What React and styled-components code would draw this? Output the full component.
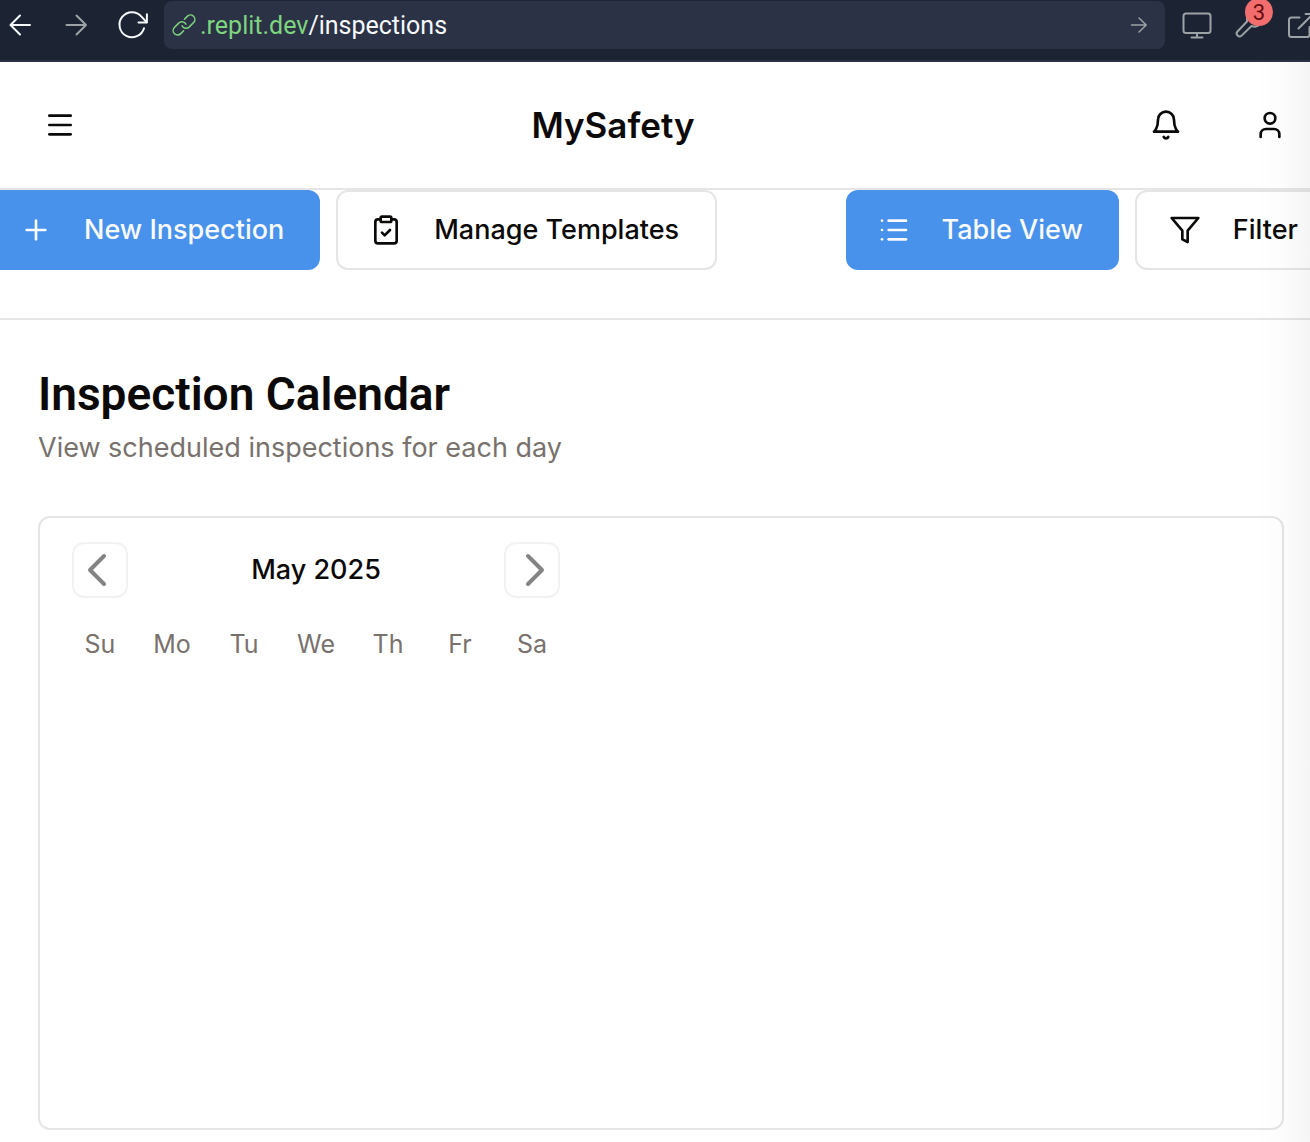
import React from "react";
import styled, { createGlobalStyle, css } from "styled-components";
import { Menu, Plus, ClipboardCheck, List } from "lucide-react";

const GlobalStyle = createGlobalStyle`
  *, *::before, *::after { box-sizing: border-box; }
  body {
    margin: 0;
    background: #fff;
    color: #0c0a09;
    font-family: Inter, "Liberation Sans", sans-serif;
    overflow-x: hidden;
  }
  button, input { font: inherit; color: inherit; }
  svg { display: block; flex: none; }
`;

const Page = styled.div`
  min-height: 100vh;
  display: flex;
  flex-direction: column;
`;

const BrowserBar = styled.header`
  display: flex;
  align-items: flex-start;
  height: 62px;
  padding-top: 1px;
  background: #1c2333;
  border-bottom: 2px solid #2b3245;
  overflow: hidden;
`;

const NavGroup = styled.nav`
  display: flex;
  gap: 8px;
  margin-left: -3px;
  padding-right: 7px;
`;

const BarButton = styled.button`
  position: relative;
  flex: none;
  display: grid;
  place-items: center;
  width: 48px;
  height: 48px;
  padding: 0;
  border: 0;
  background: none;
  color: ${(p) => (p.$dim ? "#9da2a6" : "#f5f9fc")};
`;

const AddressBar = styled.form`
  flex: 1;
  min-width: 0;
  display: flex;
  align-items: center;
  height: 48px;
  padding: 0 2px 0 8px;
  border-radius: 8px;
  background: #2b3245;
  font-family: Roboto, "Noto Sans", sans-serif;
  font-size: 25px;
  line-height: 33px;
`;

const Host = styled.label`
  display: flex;
  align-items: center;
  gap: 4px;
  color: #7fd57f;
`;

const PathInput = styled.input`
  flex: 1;
  min-width: 0;
  height: 33px;
  padding: 0;
  border: 0;
  outline: 0;
  background: none;
  color: #f5f9fc;
`;

const ToolGroup = styled.div`
  display: flex;
  gap: 4px;
  margin-right: -15px;
  padding-left: 8px;
`;

const Count = styled.span`
  position: absolute;
  top: -3px;
  left: 20px;
  width: 28px;
  height: 28px;
  border-radius: 14px;
  background: #f26d6d;
  color: #660d0d;
  font-family: Roboto, "Noto Sans", sans-serif;
  font-size: 22px;
  line-height: 30px;
  text-align: center;
`;

const AppFrame = styled.div`
  position: relative;
  flex: 1;
  overflow: hidden;

  &::after {
    content: "";
    position: absolute;
    inset: 0 0 0 auto;
    width: 56px;
    background: linear-gradient(to right, rgba(0, 0, 0, 0), rgba(0, 0, 0, 0.01) 50%, rgba(0, 0, 0, 0.04));
    pointer-events: none;
  }
`;

const AppHeader = styled.div`
  display: flex;
  align-items: center;
  justify-content: space-between;
  height: 128px;
  padding-left: 20px;
  border-bottom: 2px solid #e5e5e5;
`;

const Brand = styled.h1`
  margin: 0;
  font-size: 35px;
  line-height: 56px;
  font-weight: 600;
`;

const HeaderActions = styled.div`
  display: flex;
  gap: 24px;
`;

const IconButton = styled.button`
  display: grid;
  place-items: center;
  width: 80px;
  height: 80px;
  padding: 0;
  border: 0;
  background: none;
`;

const Toolbar = styled.div`
  display: flex;
  justify-content: space-between;
  margin: 0 -26px 0 -12px;
  padding-bottom: 48px;
  border-bottom: 2px solid #e5e5e5;
`;

const ToolbarGroup = styled.div`
  display: flex;
  gap: 16px;
`;

const ActionButton = styled.button`
  display: flex;
  align-items: center;
  gap: 32px;
  height: 80px;
  padding: 0 36px 0 32px;
  border: 0;
  border-radius: 12px;
  font-size: 27px;
  line-height: 40px;
  font-weight: 500;
  white-space: nowrap;
  ${(p) =>
    p.$primary
      ? css`
          background: #4892eb;
          color: #f8fafc;
        `
      : css`
          border: 2px solid #e5e5e5;
          background: #fff;
          color: #0c0a09;
        `}
`;

const Content = styled.main`
  padding: 48px 26px 12px 38px;
`;

const Heading = styled.h2`
  margin: 0 0 8px;
  font-family: Roboto, Inter, sans-serif;
  font-size: 46px;
  line-height: 52px;
  font-weight: 600;
`;

const Description = styled.p`
  margin: 0;
  color: #78716c;
  font-size: 27px;
  line-height: 40px;
`;

const CalendarCard = styled.section`
  min-height: 614px;
  margin-top: 48px;
  padding: 24px 32px;
  border: 2px solid #e5e5e5;
  border-radius: 12px;
`;

const Calendar = styled.div`
  width: 488px;
  max-width: 100%;
`;

const MonthBar = styled.div`
  display: flex;
  align-items: center;
  justify-content: space-between;
`;

const Month = styled.h3`
  margin: 0;
  font-size: 27px;
  line-height: 40px;
  font-weight: 500;
`;

const MonthButton = styled.button`
  display: grid;
  place-items: center;
  width: 56px;
  height: 56px;
  padding: 0;
  border: 2px solid #f2f2f2;
  border-radius: 12px;
  background: none;
  color: #858484;
`;

const Week = styled.table`
  display: block;
  margin-top: 26px;

  thead { display: block; }
  tr { display: flex; justify-content: space-between; }
`;

const Weekday = styled.th`
  width: 56px;
  padding: 0;
  color: #78716c;
  font-size: 25px;
  line-height: 40px;
  font-weight: 400;
  text-align: center;
`;

function Glyph({ size = 32, weight = 2, children }) {
  return (
    <svg
      width={size}
      height={size}
      viewBox={`0 0 ${size} ${size}`}
      fill="none"
      stroke="currentColor"
      strokeWidth={weight}
      strokeLinecap="round"
      strokeLinejoin="round"
      aria-hidden="true"
    >
      {children}
    </svg>
  );
}

function OutlineIcon({ children }) {
  return (
    <svg
      width="32"
      height="32"
      viewBox="0 0 24 24"
      fill="none"
      stroke="currentColor"
      strokeWidth="2"
      strokeLinecap="round"
      strokeLinejoin="round"
      aria-hidden="true"
    >
      {children}
    </svg>
  );
}

const weekdays = ["Su", "Mo", "Tu", "We", "Th", "Fr", "Sa"];

export default function App() {
  return (
    <Page>
      <GlobalStyle />
      <BrowserBar>
        <NavGroup aria-label="History">
          <BarButton type="button" aria-label="Back">
            <Glyph><path d="M25 16H5.5M15 6.5 5.5 16l9.5 9.5" /></Glyph>
          </BarButton>
          <BarButton type="button" aria-label="Forward" $dim>
            <Glyph><path d="M5.5 16H25M15.500 6.500 25 16l-9.500 9.500" /></Glyph>
          </BarButton>
          <BarButton type="button" aria-label="Reload">
            <Glyph>
              <path d="M27 19.2A12.500 12.500 0 1 1 24.500 7.600L29.500 13.200" />
              <path d="M21.500 13.600h8.400V5.200" />
            </Glyph>
          </BarButton>
        </NavGroup>

        <AddressBar onSubmit={(e) => e.preventDefault()}>
          <Host htmlFor="path">
            <Glyph size={24} weight={1.5}>
              <path d="m12.4 6.2 2.8-2.8a4.4 4.4 0 0 1 6.4 6.2l-4.3 4.3a4.4 4.4 0 0 1-6.4 0 4.4 4.4 0 0 1-.8-1.2" />
              <path d="m11.6 17.8-2.8 2.8a4.4 4.4 0 0 1-6.4-6.2l4.3-4.3a4.4 4.4 0 0 1 6.4 0 4.4 4.4 0 0 1 .8 1.2" />
            </Glyph>
            .replit.dev
          </Host>
          <PathInput id="path" defaultValue="/inspections" />
          <BarButton type="submit" aria-label="Go" $dim>
            <Glyph size={24} weight={1.5}><path d="M4.5 12h14.6M12 5l7.2 7-7.2 7" /></Glyph>
          </BarButton>
        </AddressBar>

        <ToolGroup>
          <BarButton type="button" aria-label="Device view" $dim>
            <Glyph>
              <rect x="2.5" y="4.5" width="27" height="19.5" rx="2.5" />
              <path d="M16 24v4.5M10.5 28.5h11" />
            </Glyph>
          </BarButton>
          <BarButton type="button" aria-label="Developer tools" $dim>
            <Glyph>
              <path d="M14 7v5.5L4.500 22.500a2.900 2.900 0 0 0 4.100 4.100L18.500 17c3 1 6.500.8 8.500-2" />
            </Glyph>
            <Count>3</Count>
          </BarButton>
          <BarButton type="button" aria-label="Open in new tab" $dim>
            <Glyph>
              <path d="M14.5 8.5H6.500A2.500 2.500 0 0 0 4 11v14.500A2.500 2.500 0 0 0 6.500 28H22a2.500 2.500 0 0 0 2.500-2.500V18M13.500 19.500 28 5M20.500 5H28v8" />
            </Glyph>
          </BarButton>
        </ToolGroup>
      </BrowserBar>

      <AppFrame>
        <AppHeader>
          <IconButton type="button" aria-label="Menu"><Menu size={32} /></IconButton>
          <Brand>MySafety</Brand>
          <HeaderActions>
            <IconButton type="button" aria-label="Notifications">
              <OutlineIcon>
                <path d="M6 8a6 6 0 0 1 12 0c0 7 3 9 3 9H3s3-2 3-9" />
                <path d="M10.3 21a1.94 1.94 0 0 0 3.4 0" />
              </OutlineIcon>
            </IconButton>
            <IconButton type="button" aria-label="Account">
              <OutlineIcon>
                <path d="M19 21v-2a4 4 0 0 0-4-4H9a4 4 0 0 0-4 4v2" />
                <circle cx="12" cy="7" r="4" />
              </OutlineIcon>
            </IconButton>
          </HeaderActions>
        </AppHeader>

        <Toolbar>
          <ToolbarGroup>
            <ActionButton type="button" $primary><Plus size={32} />New Inspection</ActionButton>
            <ActionButton type="button"><ClipboardCheck size={32} />Manage Templates</ActionButton>
          </ToolbarGroup>
          <ToolbarGroup>
            <ActionButton type="button" $primary><List size={32} />Table View</ActionButton>
            <ActionButton type="button">
              <OutlineIcon><polygon points="22 3 2 3 10 12.46 10 19 14 21 14 12.46 22 3" /></OutlineIcon>
              Filter
            </ActionButton>
          </ToolbarGroup>
        </Toolbar>

        <Content>
          <Heading>Inspection Calendar</Heading>
          <Description>View scheduled inspections for each day</Description>
          <CalendarCard aria-label="Calendar">
            <Calendar>
              <MonthBar>
                <MonthButton type="button" aria-label="Previous month">
                  <Glyph size={40} weight={4}><path d="M24 6 10 20l14 14" /></Glyph>
                </MonthButton>
                <Month>May 2025</Month>
                <MonthButton type="button" aria-label="Next month">
                  <Glyph size={40} weight={4}><path d="m16 6 14 14-14 14" /></Glyph>
                </MonthButton>
              </MonthBar>
              <Week>
                <thead>
                  <tr>
                    {weekdays.map((day) => <Weekday key={day} scope="col">{day}</Weekday>)}
                  </tr>
                </thead>
              </Week>
            </Calendar>
          </CalendarCard>
        </Content>
      </AppFrame>
    </Page>
  );
}
